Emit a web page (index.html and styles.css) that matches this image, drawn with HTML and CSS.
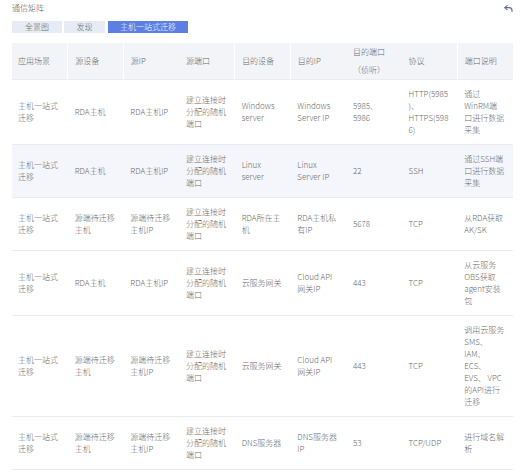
FILE: index.html
```html
<!DOCTYPE html>
<html lang="zh-CN">
<head>
<meta charset="utf-8">
<title>通信矩阵</title>
<link rel="stylesheet" href="styles.css">
</head>
<body>
<div class="page">
  <div class="titlebar">
    <span class="title">通信矩阵</span>
    <svg class="back" width="9" height="7" viewBox="0 0 9 7" aria-hidden="true">
      <path d="M3.2 0.6 L0.8 2.6 L3.2 4.6" fill="none" stroke="#5f6f86" stroke-width="1.1" stroke-linejoin="round" stroke-linecap="round"/>
      <path d="M1 2.6 H5.2 C7 2.6 8 3.6 8 5.2 V6.6" fill="none" stroke="#5f6f86" stroke-width="1.1" stroke-linecap="round"/>
    </svg>
  </div>
  <div class="tabs">
    <span class="tab">全景图</span>
    <span class="tab tab-narrow">发现</span>
    <span class="tab tab-active">主机一站式迁移</span>
  </div>
  <table class="matrix">
    <thead>
      <tr>
        <th class="sep">应用场景</th>
        <th class="sep">源设备</th>
        <th>源IP</th>
        <th class="sep">源端口</th>
        <th class="sep">目的设备</th>
        <th>目的IP</th>
        <th>目的端口<br>（侦听）</th>
        <th class="sep">协议</th>
        <th>端口说明</th>
      </tr>
    </thead>
    <tbody>
      <tr>
        <td>主机一站式<br>迁移</td>
        <td>RDA主机</td>
        <td>RDA主机IP</td>
        <td>建立连接时<br>分配的随机<br>端口</td>
        <td>Windows<br>server</td>
        <td>Windows<br>Server IP</td>
        <td>5985、<br>5986</td>
        <td>HTTP(5985<br>)、<br>HTTPS(598<br>6)</td>
        <td>通过<br>WinRM端<br>口进行数据<br>采集</td>
      </tr>
      <tr class="hl">
        <td>主机一站式<br>迁移</td>
        <td>RDA主机</td>
        <td>RDA主机IP</td>
        <td>建立连接时<br>分配的随机<br>端口</td>
        <td>Linux<br>server</td>
        <td>Linux<br>Server IP</td>
        <td>22</td>
        <td>SSH</td>
        <td>通过SSH端<br>口进行数据<br>采集</td>
      </tr>
      <tr>
        <td>主机一站式<br>迁移</td>
        <td>源端待迁移<br>主机</td>
        <td>源端待迁移<br>主机IP</td>
        <td>建立连接时<br>分配的随机<br>端口</td>
        <td>RDA所在主<br>机</td>
        <td>RDA主机私<br>有IP</td>
        <td>5678</td>
        <td>TCP</td>
        <td>从RDA获取<br>AK/SK</td>
      </tr>
      <tr>
        <td>主机一站式<br>迁移</td>
        <td>RDA主机</td>
        <td>RDA主机IP</td>
        <td>建立连接时<br>分配的随机<br>端口</td>
        <td>云服务网关</td>
        <td>Cloud API<br>网关IP</td>
        <td>443</td>
        <td>TCP</td>
        <td>从云服务<br>OBS获取<br>agent安装<br>包</td>
      </tr>
      <tr>
        <td>主机一站式<br>迁移</td>
        <td>源端待迁移<br>主机</td>
        <td>源端待迁移<br>主机IP</td>
        <td>建立连接时<br>分配的随机<br>端口</td>
        <td>云服务网关</td>
        <td>Cloud API<br>网关IP</td>
        <td>443</td>
        <td>TCP</td>
        <td>调用云服务<br>SMS、<br>IAM、<br>ECS、<br>EVS、 VPC<br>的API进行<br>迁移</td>
      </tr>
      <tr>
        <td>主机一站式<br>迁移</td>
        <td>源端待迁移<br>主机</td>
        <td>源端待迁移<br>主机IP</td>
        <td>建立连接时<br>分配的随机<br>端口</td>
        <td>DNS服务器</td>
        <td>DNS服务器<br>IP</td>
        <td>53</td>
        <td>TCP/UDP</td>
        <td>进行域名解<br>析</td>
      </tr>
    </tbody>
  </table>
</div>
</body>
</html>
```
FILE: styles.css
```css
html, body {
  margin: 0;
  padding: 0;
  background: #ffffff;
}

.page {
  padding: 2px 8px 0 12px;
  font-family: "Noto Sans CJK SC", "Noto Sans", sans-serif;
  font-size: 8px;
  font-weight: 300;
  color: #6b6b6b;
}

.titlebar {
  display: flex;
  justify-content: space-between;
  align-items: center;
  height: 12px;
}

.title {
  color: #555;
  line-height: 12px;
}

.back {
  display: block;
}

.tabs {
  display: flex;
  gap: 2px;
  margin-top: 7px;
}

.tab {
  display: block;
  height: 12px;
  line-height: 12px;
  width: 50px;
  text-align: center;
  background: #e7ecf4;
  color: #666;
}

.tab-narrow {
  width: 41px;
}

.tab-active {
  width: 80px;
  margin-left: 1px;
  background: #5b80e1;
  color: #fff;
}

.matrix {
  margin-top: 10px;
  width: 501px;
  table-layout: fixed;
  border-collapse: collapse;
  border-spacing: 0;
}

.matrix th {
  background: #f2f4f8;
  font-weight: inherit;
  text-align: left;
  line-height: 18px;
  height: 36px;
  padding: 0 0 0 7px;
  border-bottom: 1px solid #e8ebf0;
  white-space: nowrap;
  color: #666;
}

.matrix th.sep {
  border-right: 1px solid #ffffff;
}

.matrix td {
  vertical-align: middle;
  text-align: left;
  line-height: 12px;
  padding: 8px 0 8px 7px;
  border-bottom: 1px solid #e8ebf0;
  white-space: nowrap;
  color: #6b6b6b;
}

.matrix td:first-child,
.matrix th:first-child {
  padding-left: 6px;
}

.matrix tr.hl td {
  background: #f4f6fb;
}
```
